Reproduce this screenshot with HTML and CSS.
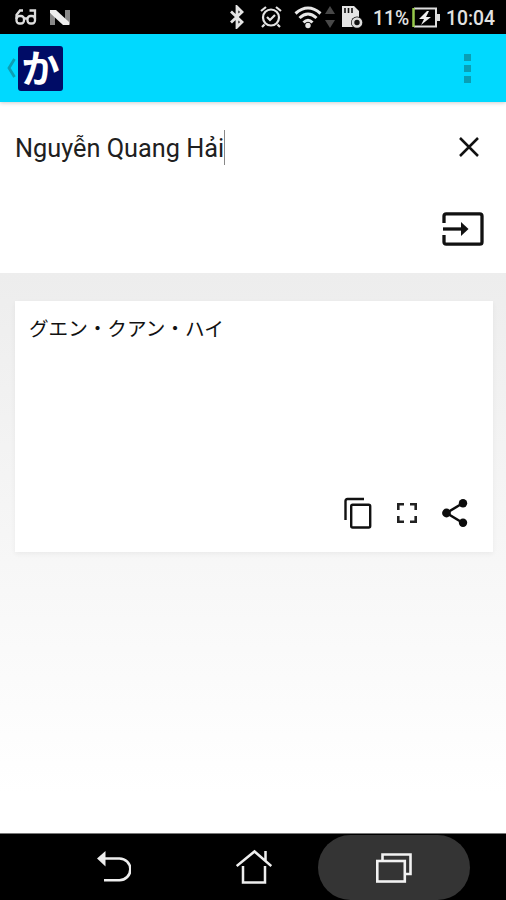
FILE: index.html
```html
<!DOCTYPE html>
<html lang="en">
<head>
<meta charset="utf-8">
<title>Name to Katakana</title>
<link rel="stylesheet" href="styles.css">
</head>
<body>
<div class="screen">
  <div class="status">
    <svg class="glasses" width="22" height="16" viewBox="0 0 22 16" fill="none" stroke="#ddd" stroke-width="2.300"><rect x="1.500" y="7" width="7.500" height="7.500" rx="3"/><rect x="12.500" y="7" width="7.500" height="7.500" rx="3"/><path d="M1.500 10V6L5 1.500h3M20 10V1.500H14.500M9 9.500h4"/></svg>
    <svg class="nlogo" width="22" height="17" viewBox="0 0 22 17"><path d="M1 4l5 3v9H1zM16 1h5v15l-5-3z" fill="#888"/><path d="M1 1h6l13 12v3h-6L1 4z" fill="#eee"/></svg>
    <svg class="bluetooth" width="16" height="24" viewBox="0 0 16 24" fill="none" stroke="#e4e4e4" stroke-width="2.800"><path d="M2 6.500l11 10.500-5 5V2l5 5L2 17.500"/></svg>
    <svg class="alarm" width="22" height="24" viewBox="0 0 22 24" fill="none" stroke="#e4e4e4" stroke-width="2.200"><circle cx="11" cy="12.500" r="8"/><path d="M1 6l5-4M21 6l-5-4M7 12l3 3 5-5M4.500 19.500L2 22M17.500 19.500L20 22"/></svg>
    <svg class="wifi" width="28" height="24" viewBox="0 0 28 24" fill="none" stroke="#e8e8e8" stroke-width="3"><path d="M1.500 8.500Q14-2.500 26.500 8.500M5.500 13Q14 5 22.500 13M9.500 17.500Q14 13 18.500 17.500"/><circle cx="14" cy="20.500" r="2.700" fill="#e8e8e8" stroke="none"/></svg>
    <svg class="traffic" width="10" height="24" viewBox="0 0 10 24" fill="#484848"><path d="M0 9l5-8 5 8zM0 15h10l-5 8z"/></svg>
    <svg class="sdcard" width="22" height="24" viewBox="0 0 22 24"><path d="M1 1h12l5 5v16H1z" fill="#e4e4e4"/><path d="M4 3v5M7.500 3v5M11 3v5" stroke="#111" stroke-width="1.600"/><circle cx="16" cy="17.500" r="6" fill="#111"/><circle cx="16" cy="17.500" r="4" fill="none" stroke="#ddd" stroke-width="2.600"/></svg>
    <span class="percent">11%</span>
    <svg class="battery" width="28" height="21" viewBox="0 0 28 21"><path d="M2 1.500h22v18H2" fill="none" stroke="#ddd" stroke-width="2"/><path d="M1.500 1v19" stroke="#96c84a" stroke-width="2.500"/><path d="M25 7h3v7h-3z" fill="#ddd"/><path d="M15 4l-8 8h5l-3 6 10-8h-5l3-6z" fill="#eee"/></svg>
    <span class="clock">10:04</span>
  </div>
  <header class="appbar">
    <svg class="up" width="9" height="20" viewBox="0 0 9 20" fill="none" stroke="#0b9fb4" stroke-width="2.800"><path d="M7.500 1L2 10l5.500 9"/></svg>
    <span class="logo">か</span>
    <span class="menu"><i></i><i></i><i></i></span>
  </header>
  <section class="entry">
    <div class="entry-row">
      <span class="name">Nguyễn Quang Hải</span><span class="caret"></span>
      <svg class="clear" width="22" height="22" viewBox="0 0 22 22" stroke="#111" stroke-width="2.500"><path d="M2 2l18 18M20 2L2 20"/></svg>
    </div>
    <svg class="submit" width="42" height="34" viewBox="0 0 42 34" fill="none" stroke="#111" stroke-width="3.300"><path d="M2 11V4q0-2.200 2.200-2.200h33.600Q40 1.800 40 4v26q0 2.200-2.200 2.200H4.200Q2 32.200 2 30v-7"/><path d="M1 17h20"/><path d="M19 10l7.500 7-7.500 7z" fill="#111" stroke="none"/></svg>
  </section>
  <main class="content">
    <article class="card">
      <p class="kana">グエン・クアン・ハイ</p>
      <div class="actions">
        <svg width="28" height="32" viewBox="0 0 28 32" fill="none" stroke="#111" stroke-width="2.400"><path d="M1.500 23V4q0-2 2-2H20"/><rect x="7.200" y="7.800" width="19" height="22.700" rx="1.500"/></svg>
        <svg class="expand" width="20" height="20" viewBox="0 0 20 20" fill="none" stroke="#222" stroke-width="2.600"><path d="M1.300 7V1.300H7M13 1.300h5.700V7M18.700 13v5.700H13M7 18.700H1.300V13"/></svg>
        <svg class="share" width="26" height="28" viewBox="0 0 26 28" fill="#0c0c0c"><path d="M21 4L4.500 14 21 24" fill="none" stroke="#0c0c0c" stroke-width="2.500"/><circle cx="21" cy="4.200" r="4.200"/><circle cx="4.500" cy="14" r="4.400"/><circle cx="21" cy="23.800" r="4.200"/></svg>
      </div>
    </article>
  </main>
  <nav class="navbar">
    <svg class="back" width="34" height="34" viewBox="0 0 34 34"><path d="M7 8.500h15.500a10.800 10.800 0 0 1 0 21.700H7" fill="none" stroke="#eee" stroke-width="2.600"/><path d="M0 8.500L8.500 1v15.500z" fill="#eee"/></svg>
    <svg class="home" width="36" height="36" viewBox="0 0 36 36" fill="none" stroke="#eee" stroke-width="2.500"><path d="M.7 17L18.500 2.500 35.300 17M29.500 12V2M7 17v16.500h22V17"/></svg>
    <span class="recents"><svg width="38" height="34" viewBox="0 0 38 34" fill="none" stroke="#f2f2f2" stroke-width="2.600"><path d="M7.500 9V3.500h28V23H30"/><rect x="2.300" y="10" width="27.500" height="20.500"/></svg></span>
  </nav>
</div>
</body>
</html>
```
FILE: styles.css
```css
* { box-sizing: border-box; }
body { margin: 0; font-family: Roboto, "Noto Sans CJK JP", sans-serif; }
svg { display: block; flex: none; }
.screen { width: 506px; height: 900px; display: flex; flex-direction: column; background: #fff; overflow: hidden; }
.status { height: 34px; flex: none; display: flex; align-items: center; background: #000; color: #e2e2e2; font-size: 19.300px; font-weight: 500; white-space: nowrap; }
.glasses { margin-left: 15px; }
.nlogo { margin-left: 12px; }
.bluetooth { margin-left: 158px; }
.alarm { margin-left: 15px; }
.wifi { margin-left: 12px; }
.traffic { margin-left: 3px; }
.sdcard { margin-left: 6px; }
.percent { width: 49px; padding-left: 10px; padding-top: 2px; }
.battery { width: 28px; }
.clock { margin-left: 6px; padding-top: 2px; }
.appbar { height: 68px; flex: none; display: flex; align-items: center; padding: 0 34px 0 7px; background: #00d9ff; box-shadow: 0 1px 4px #0003; z-index: 1; }
.logo { width: 45px; height: 45px; margin-left: 2px; border-radius: 3px; background: #000c66; color: #fff; font: 700 38px/39px "Noto Sans CJK JP", sans-serif; text-align: center; }
.menu { display: flex; flex-direction: column; gap: 4px; margin-left: auto; margin-right: 1px; }
.menu i { width: 7px; height: 7px; background: #099fb5; }
.entry { height: 171px; flex: none; padding: 25px 22px 0 15px; }
.entry-row { display: flex; align-items: center; height: 40px; }
.name { font-size: 25.300px; line-height: 40px; color: #202020; white-space: nowrap; padding-top: 4px; }
.caret { width: 1px; height: 35px; background: #888; }
.clear { margin-left: auto; margin-right: 4px; }
.submit { margin: 45px 0 0 auto; }
.content { flex: 1; padding: 28px 13px 0 15px; background: linear-gradient(#ededed, #fff 93%); }
.card { width: 478px; height: 251px; display: flex; flex-direction: column; padding: 13px 25px 23px 14px; background: #fff; box-shadow: 0 2px 5px #0000000d; }
.kana { margin: 0; font: 400 19.600px/28px "Noto Sans CJK JP", sans-serif; color: #111; }
.actions { display: flex; align-items: center; justify-content: flex-end; margin-top: auto; }
.expand { margin-left: 25px; }
.share { margin-left: 25px; }
.navbar { height: 67px; flex: none; display: flex; align-items: center; background: #000; border-top: 1px solid #777; }
.back { margin-left: 97px; }
.home { margin-left: 105px; }
.recents { width: 152px; height: 65px; margin-left: 46px; margin-top: 1px; display: flex; align-items: center; justify-content: center; background: #343434; border-radius: 33px; }
```
